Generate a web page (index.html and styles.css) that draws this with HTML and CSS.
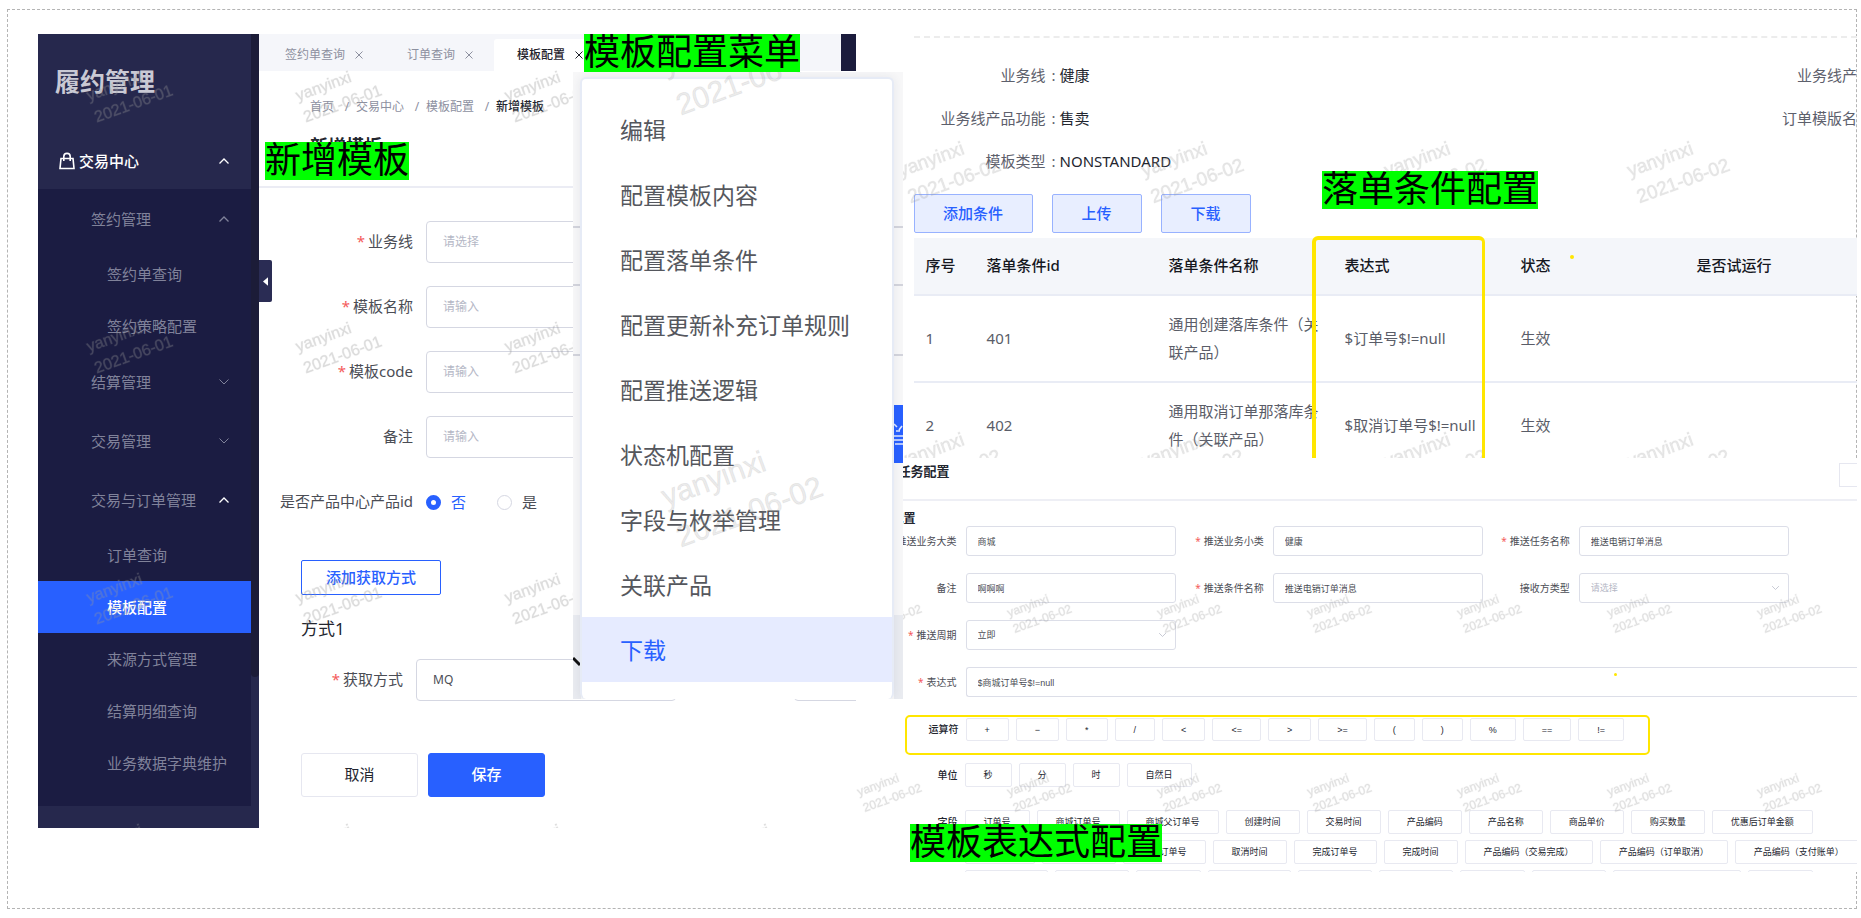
FILE: index.html
```html
<!DOCTYPE html>
<html lang="zh-CN">
<head>
<meta charset="utf-8">
<title>履约管理</title>
<link rel="stylesheet" href="styles.css">
</head>
<body>
<svg class="defs" aria-hidden="true">
  <symbol id="up" viewBox="0 0 12 8"><path d="M1.5 6.5 6 2l4.5 4.5" fill="none" stroke="currentColor" stroke-width="1.3"/></symbol>
  <symbol id="down" viewBox="0 0 12 8"><path d="M1.5 1.5 6 6l4.5-4.5" fill="none" stroke="currentColor" stroke-width="1"/></symbol>
  <symbol id="close" viewBox="0 0 8 8"><path d="M.5.5l7 7M7.5.5l-7 7" fill="none" stroke="currentColor" stroke-width="1"/></symbol>
</svg>
<main class="board">
  <section class="app">
    <aside class="sidebar">
      <nav class="nav">
        <div class="brand">履约管理</div>
        <button class="nav-top" type="button">
          <svg class="bag" viewBox="0 0 16 18"><path d="M2 6.5h12l1 10H1zM4.8 9V4.6a3.2 3.2 0 0 1 6.4 0V9" fill="none" stroke="#fff" stroke-width="1.6"/></svg>
          <span>交易中心</span><svg class="chev"><use href="#up"/></svg>
        </button>
        <div class="nav-list">
          <button class="nav-group" type="button">签约管理<svg class="chev"><use href="#up"/></svg></button>
          <a class="nav-leaf" href="#">签约单查询</a>
          <a class="nav-leaf" href="#">签约策略配置</a>
          <button class="nav-group" type="button">结算管理<svg class="chev"><use href="#down"/></svg></button>
          <button class="nav-group" type="button">交易管理<svg class="chev"><use href="#down"/></svg></button>
          <button class="nav-group open" type="button">交易与订单管理<svg class="chev"><use href="#up"/></svg></button>
          <a class="nav-leaf" href="#">订单查询</a>
          <a class="nav-leaf active" href="#">模板配置</a>
          <a class="nav-leaf" href="#">来源方式管理</a>
          <a class="nav-leaf" href="#">结算明细查询</a>
          <a class="nav-leaf" href="#">业务数据字典维护</a>
        </div>
      </nav>
      <div class="track"><div class="thumb"></div></div>
      <button class="collapse" type="button" aria-label="收起"><svg viewBox="0 0 6 10"><path d="M6 0v10L0 5z" fill="#fff"/></svg></button>
    </aside>
    <div class="work">
      <div class="tabs">
        <a class="tab" href="#">签约单查询<svg><use href="#close"/></svg></a>
        <a class="tab" href="#">订单查询<svg><use href="#close"/></svg></a>
        <a class="tab on" href="#">模板配置<svg><use href="#close"/></svg></a>
        <span class="tab-end"></span>
      </div>
      <header class="page-head">
        <nav class="crumbs"><a href="#">首页</a><i>/</i><a href="#">交易中心</a><i>/</i><a href="#">模板配置</a><i>/</i><b>新增模板</b></nav>
        <h1>新增模板</h1>
      </header>
      <form class="form">
        <div class="row"><label class="req" for="line">业务线</label><input id="line" placeholder="请选择"></div>
        <div class="row"><label class="req" for="name">模板名称</label><input id="name" placeholder="请输入"></div>
        <div class="row"><label class="req" for="code">模板code</label><input id="code" placeholder="请输入"></div>
        <div class="row"><label for="memo">备注</label><input id="memo" placeholder="请输入"></div>
        <div class="row"><span class="lab">是否产品中心产品id</span>
          <span class="radios"><label class="radio checked"><input type="radio" name="pc" checked>否</label><label class="radio"><input type="radio" name="pc">是</label></span>
        </div>
        <button class="btn-add" type="button">添加获取方式</button>
        <h2>方式1</h2>
        <div class="row way"><label class="req" for="way">获取方式</label><input id="way" value="MQ"><input class="next" aria-label="配置"></div>
        <div class="actions"><button type="button">取消</button><button class="primary" type="button">保存</button></div>
      </form>
    </div>
    <svg class="mark" aria-hidden="true">
      <pattern id="m1" width="209" height="251" patternUnits="userSpaceOnUse"><g transform="translate(51 67) rotate(-20)"><text font-size="16">yanyinxi</text><text y="23" font-size="16">2021-06-01</text></g></pattern>
      <rect width="100%" height="100%" fill="url(#m1)"/>
    </svg>
  </section>

  <div class="right">
    <section class="cond">
      <div class="dash"></div>
      <dl class="info">
        <div><dt>业务线<i>:</i></dt><dd>健康</dd><dt class="cut">业务线产</dt></div>
        <div><dt>业务线产品功能<i>:</i></dt><dd>售卖</dd><dt class="cut">订单模版名</dt></div>
        <div><dt>模板类型<i>:</i></dt><dd>NONSTANDARD</dd></div>
      </dl>
      <div class="tools"><button class="wide" type="button">添加条件</button><button type="button">上传</button><button type="button">下载</button></div>
      <table>
        <colgroup><col class="c1"><col class="c2"><col class="c3"><col class="c3"><col class="c3"><col></colgroup>
        <thead><tr><th>序号</th><th>落单条件id</th><th>落单条件名称</th><th>表达式</th><th>状态</th><th>是否试运行</th></tr></thead>
        <tbody>
          <tr><td>1</td><td>401</td><td>通用创建落库条件<span lang="zh-TW">（</span>关联产品<span lang="zh-TW">）</span></td><td>$订单号$!=null</td><td>生效</td><td></td></tr>
          <tr><td>2</td><td>402</td><td>通用取消订单那落库条件<span lang="zh-TW">（</span>关联产品<span lang="zh-TW">）</span></td><td>$取消订单号$!=null</td><td>生效</td><td></td></tr>
        </tbody>
      </table>
      <svg class="mark light" aria-hidden="true">
        <pattern id="m2" width="243" height="291" patternUnits="userSpaceOnUse"><g transform="translate(45 143) rotate(-20)"><text font-size="19">yanyinxi</text><text y="28" font-size="19">2021-06-02</text></g></pattern>
        <rect width="100%" height="100%" fill="url(#m2)"/>
      </svg>
      <div class="frame-col"></div>
      <div class="dot dot-a"></div>
    </section>

    <section class="task">
      <header class="task-head"><h2>推送任务配置</h2><button type="button" aria-label="返回"></button></header>
      <h3>配置</h3>
      <form class="task-form">
        <label class="req" for="t1">推送业务大类</label><input id="t1" value="商城">
        <label class="req" for="t2">推送业务小类</label><input id="t2" value="健康">
        <label class="req" for="t3">推送任务名称</label><input id="t3" value="推送电销订单消息">
        <label for="t4">备注</label><input id="t4" value="啊啊啊">
        <label class="req" for="t5">推送条件名称</label><input id="t5" value="推送电销订单消息">
        <label for="t6">接收方类型</label><span class="sel"><select id="t6" class="empty"><option>请选择</option></select><svg><use href="#down"/></svg></span>
        <label class="req first" for="t7">推送周期</label><span class="sel"><select id="t7"><option>立即</option></select><svg><use href="#down"/></svg></span>
        <label class="req first" for="t8">表达式</label><input id="t8" class="full" value="$商城订单号$!=null">
      </form>
      <div class="ops"><span class="cap">运算符</span><button>+</button><button>−</button><button>*</button><button>/</button><button>&lt;</button><button>&lt;=</button><button>&gt;</button><button>&gt;=</button><button>(</button><button>)</button><button>%</button><button>==</button><button>!=</button></div>
      <div class="chips units"><span class="cap">单位</span><button>秒</button><button>分</button><button>时</button><button>自然日</button></div>
      <div class="chips fields"><span class="cap">字段</span><button>订单号</button><button>商城订单号</button><button>商城父订单号</button><button>创建时间</button><button>交易时间</button><button>产品编码</button><button>产品名称</button><button>商品单价</button><button>购买数量</button><button>优惠后订单金额</button></div>
      <div class="chips more"><span class="cap"></span><span class="blank w70"></span><span class="blank w74"></span><button>取消订单号</button><button>取消时间</button><button>完成订单号</button><button>完成时间</button><button>产品编码（交易完成）</button><button>产品编码（订单取消）</button><button>产品编码（支付账单）</button></div>
      <div class="chips last"><span class="cap"></span><span class="blank w83"></span><span class="blank w74"></span><span class="blank w65"></span><span class="blank w83"></span><span class="blank w74"></span><span class="blank w74"></span><span class="blank w65"></span><span class="blank w74"></span><span class="blank w128"></span><span class="blank w65"></span></div>
      <svg class="mark light" aria-hidden="true">
        <pattern id="m3" width="150" height="179" patternUnits="userSpaceOnUse"><g transform="translate(3 159) rotate(-20)"><text font-size="12">yanyinxi</text><text y="17" font-size="12">2021-06-02</text></g></pattern>
        <rect width="100%" height="100%" fill="url(#m3)"/>
      </svg>
      <div class="dot dot-b"></div>
    </section>
  </div>

  <div class="shot">
    <svg class="behind" viewBox="0 0 330 627" aria-hidden="true">
      <rect y="543" width="8" height="84" fill="#e9ebf0"/><rect x="321" y="543" width="9" height="84" fill="#e9ebf0"/>
      <path d="M0 155h8M321 155h9M0 213h8M321 213h9M0 283h8M321 283h9" stroke="#d3d4dc" stroke-width="2"/>
      <path d="M0 586l7 7" stroke="#111" stroke-width="3"/>
      <rect x="321" y="333" width="9" height="58" fill="#2860ff"/>
      <path d="M321 364h9M321 368h9M322 372h8M321 352l3 3M326 358l3-4M323 359h4" stroke="#dfe7ff" stroke-width="1.6"/>
    </svg>
    <div class="menu">
      <button>编辑</button><button>配置模板内容</button><button>配置落单条件</button><button>配置更新补充订单规则</button><button>配置推送逻辑</button><button>状态机配置</button><button>字段与枚举管理</button><button>关联产品</button><button class="hot">下载</button>
    </div>
    <svg class="mark light" aria-hidden="true">
      <g transform="translate(93 3) rotate(-20)" font-size="30"><text>yanyinxi</text><text y="43">2021-06-02</text></g>
      <g transform="translate(93 435) rotate(-20)" font-size="30"><text>yanyinxi</text><text y="43">2021-06-02</text></g>
    </svg>
  </div>

  <strong class="note n1">新增模板</strong>
  <strong class="note n2">模板配置菜单</strong>
  <strong class="note n3">落单条件配置</strong>
  <strong class="note n4">模板表达式配置</strong>
</main>
</body>
</html>
```
FILE: styles.css
```css
* { box-sizing: border-box; margin: 0; padding: 0; }
body { padding: 9px 4px 8px 7px; background: #fff; color: #4b4d55; font: 15px/20px "Noto Sans", "Noto Sans CJK SC", sans-serif; }
button, input, select { font: inherit; color: inherit; background: none; border: 0; border-radius: 0; }
a { color: inherit; text-decoration: none; }
i { font-style: normal; }
svg { display: block; }
.defs { position: absolute; width: 0; height: 0; }

.board { position: relative; display: grid; grid-template-columns: 818fr 1001fr; align-items: start; border: 1px dashed #b4b4b4; padding: 24px 0 36px 30px; }

/* watermark layer */
.mark { position: absolute; inset: 0; width: 100%; height: 100%; pointer-events: none; font-family: "Liberation Sans", sans-serif; }
.mark text { fill: #969696; fill-opacity: .28; stroke: #969696; stroke-opacity: .12; stroke-width: 1; }
.light text { fill-opacity: .2; }

/* highlight notes */
.note { position: absolute; height: 38px; background: #0f0; color: #000; font: 400 36px/30px "Noto Sans CJK SC", sans-serif; white-space: nowrap; }
.n1 { left: 257px; top: 132px; }
.n2 { left: 576px; top: 24px; }
.n3 { left: 1314px; top: 161px; }
.n4 { left: 902px; top: 814px; }

/* left application */
.app { position: relative; display: flex; overflow: hidden; }
.sidebar { position: relative; display: flex; width: 221px; flex: none; background: #26284d; color: #80829a; }
.nav { flex: 1; }
.brand { height: 101px; padding: 0 17px 5px; color: #c9c9d4; font-size: 25px; font-weight: 700; line-height: 94px; }
.nav-top { display: flex; align-items: center; width: 100%; height: 54px; padding: 0 21px 2px; gap: 4px; color: #fff; font-weight: 500; }
.bag { width: 16px; height: 18px; }
.chev { width: 12px; height: 8px; margin-left: auto; }
.nav-list { background: #1b1c42; padding-bottom: 17px; }
.nav-group { display: flex; align-items: center; width: 100%; height: 59px; padding: 0 21px 0 53px; }
.open .chev { color: #fff; }
.nav-leaf { display: flex; align-items: center; height: 52px; padding-left: 69px; }
.nav-leaf.active { background: #2860ff; color: #fff; font-weight: 500; }
.track { width: 8px; flex: none; background: #26284d; }
.thumb { height: 81%; background: #1c1c38; border-radius: 0 0 5px 5px; }
.collapse { position: absolute; left: 221px; top: 226px; width: 13px; height: 42px; background: #2a2c54; border-radius: 0 2px 2px 0; display: flex; align-items: center; justify-content: center; }
.collapse svg { width: 5px; height: 9px; }

.work { flex: 1; min-width: 0; background: #fff; }
.tabs { display: flex; height: 37px; background: #f5f6fa; color: #8d909f; font-size: 12px; }
.tab { display: flex; align-items: center; gap: 10px; height: 37px; padding: 4px 18px 0 26px; margin-right: 3px; }
.tab svg { width: 8px; height: 8px; }
.tab + .tab { padding-left: 23px; }
.tab.on { margin-top: 5px; height: 32px; padding-top: 0; padding-bottom: 1px; background: #fff; color: #1f222b; border-radius: 3px 3px 0 0; font-weight: 500; }
.tab-end { width: 15px; margin-left: auto; background: #1b1c3c; }
.page-head { padding: 26px 0 28px 51px; border-bottom: 2px solid #ebecf4; }
.crumbs { display: flex; color: #8d909f; font-size: 12px; line-height: 20px; }
.crumbs i { width: 22px; text-align: center; padding-left: 4px; }
.crumbs b { color: #23262f; font-weight: 500; }
h1 { margin-top: 17px; font-size: 18px; line-height: 24px; color: #23262f; }
.form { padding: 33px 0 31px; }
.row { display: flex; align-items: center; height: 42px; gap: 13px; margin-bottom: 23px; }
.row > label, .lab { width: 154px; flex: none; text-align: right; white-space: nowrap; padding-bottom: 2px; }
.req::before { content: "*"; color: #f45b5b; margin-right: 3px; }
.row > input { width: 260px; height: 42px; flex: none; padding: 0 16px 1px; border: 1px solid #d5d7e2; border-radius: 4px; font-size: 12px; }
::placeholder { color: #b5b8c6; opacity: 1; }
.radios { display: flex; gap: 31px; }
.radio { display: flex; align-items: center; gap: 10px; }
.radio input { appearance: none; width: 15px; height: 15px; border: 1px solid #d5d7e2; border-radius: 50%; }
.radio input:checked { border: 5px solid #2860ff; }
.checked { color: #2860ff; }
.btn-add { display: block; width: 140px; height: 35px; margin: 37px 0 22px 42px; padding-bottom: 2px; border: 1px solid #2860ff; border-radius: 2px; color: #2860ff; font-weight: 500; }
.form h2 { margin: 0 0 18px 42px; font-size: 17px; line-height: 24px; font-weight: 400; color: #23262f; }
.way { margin-bottom: 52px; }
.row.way > label { width: 144px; }
.row > .next { margin-left: 105px; }
.actions { display: flex; gap: 10px; padding-left: 42px; }
.actions button { width: 117px; height: 44px; padding-bottom: 2px; border: 1px solid #e6e7f0; border-radius: 3px; color: #23262f; }
.actions .primary { background: #2860ff; border-color: #2860ff; color: #fff; font-weight: 500; }

/* menu capture */
.shot { position: absolute; left: 565px; top: 62px; width: 330px; height: 627px; background: #f7f7f8; overflow: hidden; }
.behind { position: absolute; inset: 0; width: 330px; height: 627px; }
.menu { position: relative; margin: 5px 9px 0 7px; height: 622px; padding-top: 18px; background: #fff; border: 2px solid #e6ebf6; border-bottom: 0; border-radius: 6px; box-shadow: 0 0 10px rgba(40, 50, 90, .08); display: flex; flex-direction: column; }
.menu button { height: 65px; flex: none; padding-left: 38px; text-align: left; font-size: 23px; line-height: 30px; color: #55575d; }
.menu .hot { background: #e6ebff; color: #2860ff; }

/* right column */
.right { margin-right: -1px; position: relative; min-width: 0; }
.cond { position: relative; height: 424px; padding: 2px 0 0 58px; overflow: hidden; }
.dash { border-top: 2px dashed #ececec; }
.info { padding-top: 15px; }
.info div { display: flex; height: 43px; align-items: center; }
.info dt { width: 142px; text-align: right; color: #5d606c; white-space: nowrap; }
.info dt i { margin-left: 6px; }
.info dd { flex: 1; padding-left: 4px; color: #23262f; }
.info .cut { width: 75px; }
.tools { display: flex; gap: 19px; margin: 12px 0 5px; }
.tools button { width: 90px; height: 39px; padding-bottom: 2px; border: 1px solid #98b2ff; border-radius: 2px; background: #e8eeff; color: #2860ff; font-weight: 500; }
.tools .wide { width: 119px; }
table { width: 100%; table-layout: fixed; border-collapse: collapse; line-height: 28px; color: #5a5d68; }
.c1 { width: 61px; } .c2 { width: 182px; } .c3 { width: 176px; }
th { height: 57px; background: #f4f6fa; color: #16181f; font-weight: 500; }
td { height: 87px; }
th, td { padding: 0 12px 2px; text-align: left; border-bottom: 2px solid #e9ecf5; }
td:first-child, th:first-child { padding-right: 0; }
td span { font-family: "Noto Sans CJK TC", sans-serif; line-height: 20px; }
.frame-col { position: absolute; left: 456px; top: 202px; width: 173px; height: 240px; border: 4px solid #ffe600; border-right-width: 3px; border-radius: 6px; }
.dot { position: absolute; background: #ffe600; border-radius: 50%; }
.dot-a { left: 714px; top: 221px; width: 4px; height: 4px; }
.dot-b { left: 758px; top: 215px; width: 3px; height: 3px; }

.task { position: relative; background: #fff; padding-left: 47px; height: 414px; overflow: hidden; font-size: 10px; line-height: 14px; }
.task-head { display: flex; justify-content: space-between; height: 43px; padding-top: 3px; margin-left: -47px; padding-left: 16px; border-bottom: 2px solid #eeeff5; }
.task-head h2 { font-size: 13px; line-height: 20px; color: #23262f; }
.task-head button { width: 18px; height: 24px; margin-top: 2px; border: 1px solid #e6e7f0; border-right: 0; }
h3 { margin: 11px 0 0 -11px; font-size: 12px; line-height: 14px; color: #23262f; }
.task-form { display: grid; grid-template-columns: 63px 210fr 97px 210fr 96px 210fr 68px; row-gap: 17px; }
.task-form > label { align-self: center; text-align: right; padding-right: 9px; white-space: nowrap; justify-self: end; }
.task-form > label:nth-of-type(3n+1) { grid-column: 1; }
.task-form .first { grid-column: 1; }
.task-form input, .sel select { width: 100%; height: 30px; min-width: 0; padding: 0 11px; border: 1px solid #dcdee8; border-radius: 3px; font-size: 9px; }
.task-form .full { grid-column: 2 / -1; border-right: 0; border-radius: 3px 0 0 3px; font-family: "Liberation Sans", "Noto Sans CJK SC", sans-serif; }
.sel { position: relative; }
.sel select { appearance: none; }
.sel .empty { color: #b5b8c6; }
.sel svg { position: absolute; right: 9px; top: 12px; width: 9px; height: 6px; color: #b5b8c6; }
.cap { flex: none; text-align: right; font-size: 10px; font-weight: 500; color: #23262f; }
.ops, .chips { display: flex; align-items: center; gap: 7px; white-space: nowrap; }
.ops { width: fit-content; height: 40px; margin: 18px 0 0 2px; padding: 1px 24px 12px 0; border: 2px solid #ffe600; border-radius: 5px; font-family: "Liberation Sans", "Noto Sans CJK SC", sans-serif; }
.ops .cap { width: 52px; }
.chips .cap { width: 55px; }
.ops button, .chips button, .blank { flex: none; height: 24px; padding: 0 18px; border: 1px solid #e8e9f1; border-radius: 2px; color: #23262f; font-size: 9px; line-height: 14px; }
.ops button { height: 23px; }
.units { margin-top: 8px; }
.fields { margin-top: 23px; }
.more, .last { margin-top: 6px; }
.w65 { width: 65px; } .w70 { width: 70px; } .w74 { width: 74px; } .w83 { width: 83px; } .w128 { width: 128px; }
.last { height: 2px; align-items: flex-start; overflow: hidden; }
```
